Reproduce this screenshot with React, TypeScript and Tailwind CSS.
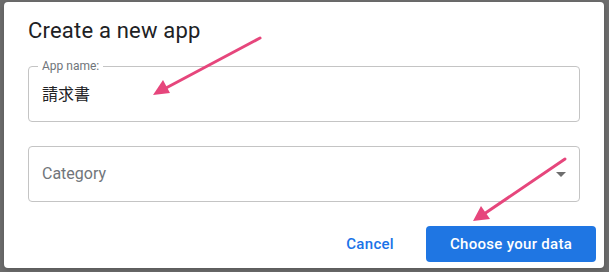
export default function App() {
  return (
    <div
      className="relative w-[609px] h-[272px] bg-[#6d6d6d] pt-[2px] pl-[4px] pr-[5px] pb-[4px]"
      style={{ fontFamily: "Roboto, 'Noto Sans CJK JP', sans-serif" }}
    >
      {/* Dialog */}
      <div className="h-full bg-white rounded-[4px] px-6 pt-[14px] flex flex-col shadow-[0_2px_6px_rgba(0,0,0,0.2)]">
        <h2 className="text-[22px] leading-[30px] text-[#202124] tracking-[0.2px]">Create a new app</h2>

        {/* App name field */}
        <div className="relative mt-[20px] h-[56px] border border-[#c4c4c4] rounded-[4px] flex items-center px-[13px]">
          <span className="absolute -top-[8px] left-[9px] px-[4px] bg-white text-[12px] leading-[14px] text-[#70757a]">
            App name:
          </span>
          <span className="text-[16px] text-[#202124] pt-[2px]">請求書</span>
        </div>

        {/* Category select */}
        <div className="mt-[24px] h-[56px] border border-[#c4c4c4] rounded-[4px] flex items-center justify-between px-[13px]">
          <span className="text-[16px] text-[#70757a]">Category</span>
          <svg width="10" height="5" viewBox="0 0 10 5">
            <path d="M0 0h10L5 5z" fill="#6e6e6e" />
          </svg>
        </div>

        {/* Actions */}
        <div className="mt-[24px] -mr-[16px] flex items-center justify-end gap-[16px]">
          <button className="px-[16px] h-[36px] text-[15px] font-medium text-[#1a73e8] tracking-[0.3px]">
            Cancel
          </button>
          <button className="w-[170px] h-[36px] rounded-[4px] bg-[#1f76e3] text-white text-[15px] font-medium tracking-[0.3px]">
            Choose your data
          </button>
        </div>
      </div>

      {/* Annotation arrows */}
      <svg className="absolute inset-0 pointer-events-none" width="609" height="272">
        <g stroke="#e6467c" strokeWidth="3" strokeLinecap="round" fill="#e6467c">
          <line x1="260" y1="38" x2="166" y2="88" />
          <polygon points="153,95 163,80 170,93" stroke="none" />
          <line x1="565" y1="159" x2="484" y2="214" />
          <polygon points="473,221 481,206 490,219" stroke="none" />
        </g>
      </svg>
    </div>
  );
}
